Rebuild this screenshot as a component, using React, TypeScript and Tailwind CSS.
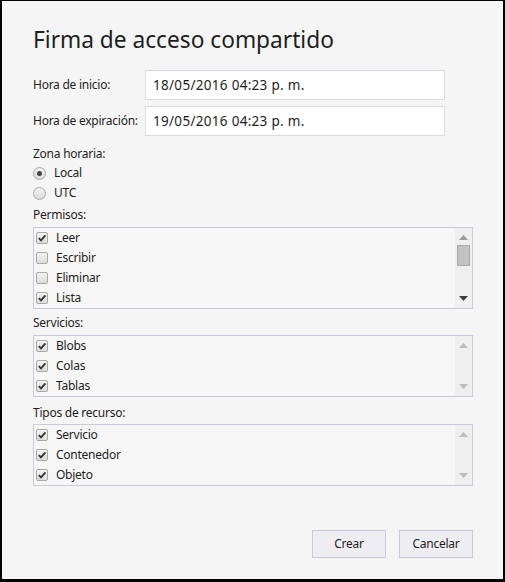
import React from "react";

type Item = { label: string; checked: boolean };

const permisos: Item[] = [
  { label: "Leer", checked: true },
  { label: "Escribir", checked: false },
  { label: "Eliminar", checked: false },
  { label: "Lista", checked: true },
];

const servicios: Item[] = [
  { label: "Blobs", checked: true },
  { label: "Colas", checked: true },
  { label: "Tablas", checked: true },
];

const tipos: Item[] = [
  { label: "Servicio", checked: true },
  { label: "Contenedor", checked: true },
  { label: "Objeto", checked: true },
];

function CheckBox({ checked }: { checked: boolean }) {
  return (
    <span className="w-[12px] h-[12px] rounded-[2px] border border-[#a9a9a9] bg-gradient-to-b from-[#f2f2f2] to-[#dcdcdc] flex items-center justify-center">
      {checked && (
        <svg width="10" height="10" viewBox="0 0 10 10">
          <path d="M1.8 5.2 L4 7.4 L8.4 2.4" fill="none" stroke="#333" strokeWidth="1.8" />
        </svg>
      )}
    </span>
  );
}

function Radio({ checked }: { checked: boolean }) {
  return (
    <span className="w-[13px] h-[13px] rounded-full border border-[#a9a9a9] bg-gradient-to-b from-[#f2f2f2] to-[#dcdcdc] flex items-center justify-center">
      {checked && <span className="w-[5px] h-[5px] rounded-full bg-[#444]" />}
    </span>
  );
}

function Triangle({ up, color }: { up: boolean; color: string }) {
  return (
    <svg width="9" height="5" viewBox="0 0 9 5">
      <path d={up ? "M0 5 L4.5 0 L9 5 Z" : "M0 0 L4.5 5 L9 0 Z"} fill={color} />
    </svg>
  );
}

function ListBox({ items, scroll }: { items: Item[]; scroll?: boolean }) {
  return (
    <div className="flex border border-[#cbcbdd] bg-[#f6f6f6]">
      <div className="flex-1 flex flex-col">
        {items.map((it) => (
          <div key={it.label} className="h-[20px] flex items-center pl-[2px] gap-[8px]">
            <CheckBox checked={it.checked} />
            <span>{it.label}</span>
          </div>
        ))}
      </div>
      <div className="w-[17px] bg-[#efefef] flex flex-col items-center justify-between pt-[7px] pb-[7px] relative">
        <Triangle up color={scroll ? "#9a9a9a" : "#bdbdbd"} />
        {scroll && (
          <span className="absolute top-[17px] left-[2px] w-[13px] h-[21px] bg-[#c3c3c3] border border-[#a8a8a8]" />
        )}
        <Triangle up={false} color={scroll ? "#3c3c3c" : "#bdbdbd"} />
      </div>
    </div>
  );
}

export default function App() {
  return (
    <div
      className="w-[505px] h-[582px] bg-[#f5f5f5] border-l-2 border-t border-r-2 border-b-[3px] border-black text-[#1e1e1e] text-[12px] tracking-[-0.25px] flex flex-col pl-[31px] pr-[30px] pt-[24px] pb-[21px]"
      style={{ fontFamily: '"Noto Sans", sans-serif' }}
    >
      <h1 className="h-[30px] text-[22.7px] leading-[30px] font-normal tracking-normal">Firma de acceso compartido</h1>

      <div className="mt-[15px] flex items-center h-[30px]">
        <span className="w-[112px]">Hora de inicio:</span>
        <div className="w-[300px] h-[30px] bg-white border border-[#dcdce6] flex items-center pl-[7px] text-[13.5px] tracking-[0.3px]">
          18/05/2016 04:23 p. m.
        </div>
      </div>
      <div className="mt-[6px] flex items-center h-[30px]">
        <span className="w-[112px]">Hora de expiración:</span>
        <div className="w-[300px] h-[30px] bg-white border border-[#dcdce6] flex items-center pl-[7px] text-[13.5px] tracking-[0.3px]">
          19/05/2016 04:23 p. m.
        </div>
      </div>

      <div className="mt-[9px] h-[18px] flex items-center">Zona horaria:</div>
      <div className="h-[20px] flex items-center gap-[8px]">
        <Radio checked />
        <span>Local</span>
      </div>
      <div className="h-[20px] flex items-center gap-[8px]">
        <Radio checked={false} />
        <span>UTC</span>
      </div>

      <div className="mt-[2px] h-[20px] flex items-center">Permisos:</div>
      <div className="mt-[2px]">
        <ListBox items={permisos} scroll />
      </div>

      <div className="mt-[4px] h-[20px] flex items-center">Servicios:</div>
      <div className="mt-[2px]">
        <ListBox items={servicios} />
      </div>

      <div className="mt-[6px] h-[20px] flex items-center">Tipos de recurso:</div>
      <div className="mt-[1px]">
        <ListBox items={tipos} />
      </div>

      <div className="mt-auto flex justify-end gap-[13px]">
        <button className="w-[74px] h-[28px] bg-[#eeeef2] border border-[#c9c9dd]">Crear</button>
        <button className="w-[74px] h-[28px] bg-[#eeeef2] border border-[#c9c9dd]">Cancelar</button>
      </div>
    </div>
  );
}
